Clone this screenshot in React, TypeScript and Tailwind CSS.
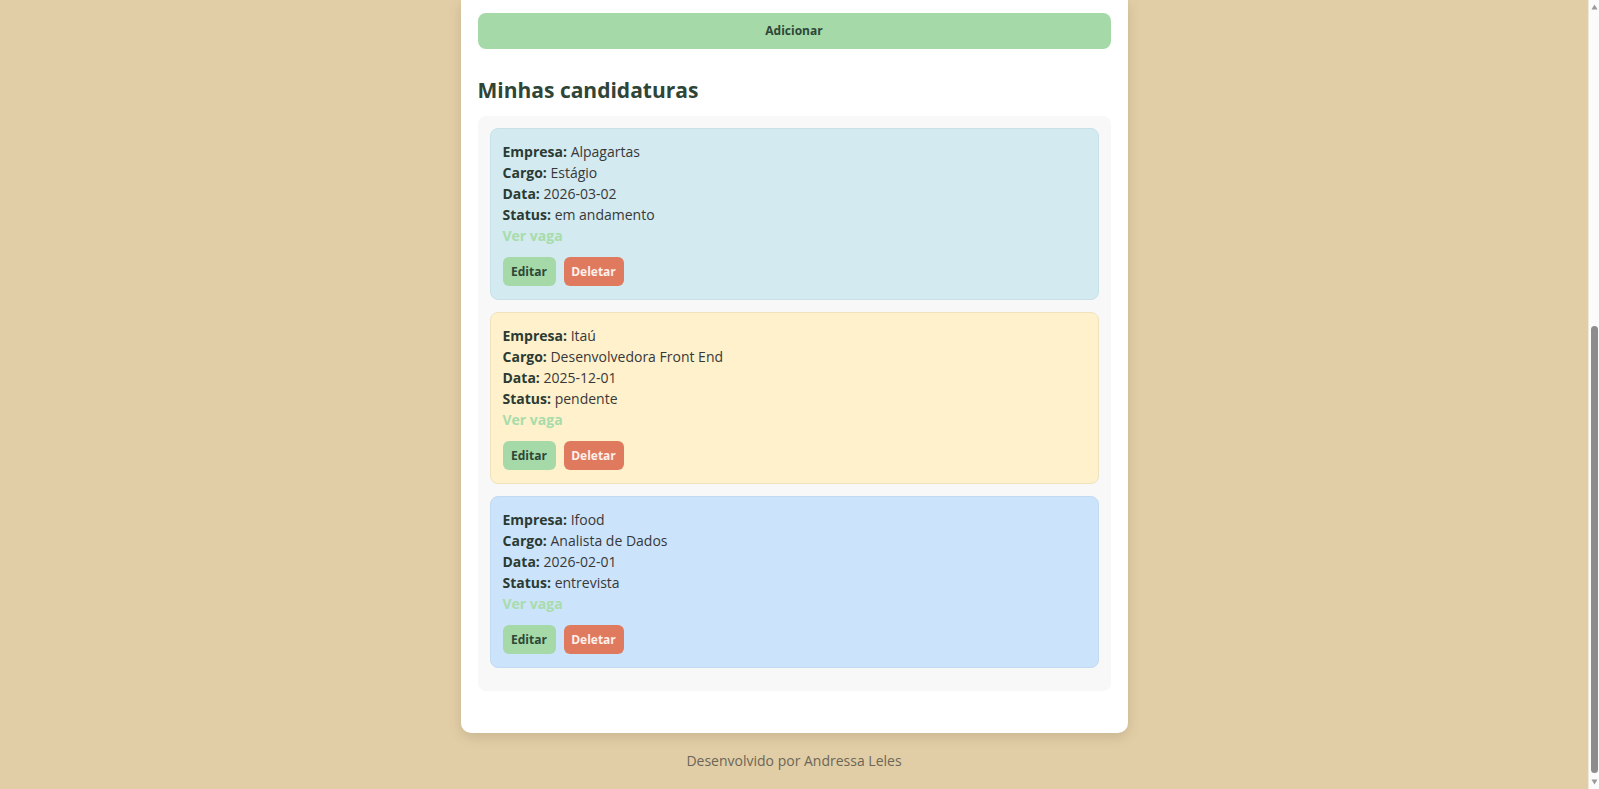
import React from "react";

type Cand = { empresa: string; cargo: string; data: string; status: string; bg: string };

const cands: Cand[] = [
  { empresa: "Alpagartas", cargo: "Estágio", data: "2026-03-02", status: "em andamento", bg: "bg-[#d2eaf0] border-[#c8e1e8]" },
  { empresa: "Itaú", cargo: "Desenvolvedora Front End", data: "2025-12-01", status: "pendente", bg: "bg-[#fef1cc] border-[#efe2bd]" },
  { empresa: "Ifood", cargo: "Analista de Dados", data: "2026-02-01", status: "entrevista", bg: "bg-[#cce4fb] border-[#c3dbf2]" },
];

function Scrollbar() {
  return (
    <div className="flex w-[11px] flex-col items-center border-l border-[#efe9dc] bg-[#fbfbfb] pt-[4px] pb-[4px]">
      <svg width="7" height="6" viewBox="0 0 7 6" className="shrink-0">
        <path d="M3.5 0.5 L6.5 5.5 L0.5 5.5 Z" fill="#9a9a9a" />
      </svg>
      <div className="flex-1" />
      <div className="h-[447px] w-[7px] shrink-0 rounded-full bg-[#8d8d8d]" />
      <svg width="7" height="6" viewBox="0 0 7 6" className="mt-[6px] shrink-0">
        <path d="M0.5 0.5 L6.5 0.5 L3.5 5.5 Z" fill="#9a9a9a" />
      </svg>
    </div>
  );
}

export default function App() {
  return (
    <div
      className="flex h-screen w-full overflow-hidden bg-[#e2cea6]"
      style={{ fontFamily: '"Open Sans", "Noto Sans", sans-serif' }}
    >
      <main className="flex flex-1 flex-col items-center">
        <div className="w-[667px] rounded-b-[10px] bg-white px-[17px] pt-[13px] pb-[42px] shadow-[0_4px_14px_rgba(0,0,0,0.12)]">
          <button className="h-[36px] w-full rounded-[8px] bg-[#a5d9a7] text-[12px] font-bold text-[#2d4739]">
            Adicionar
          </button>

          <h2 className="mt-[26px] mb-[11px] text-[21px] leading-[30px] font-bold text-[#2f4538]">Minhas candidaturas</h2>

          <div className="flex flex-col gap-[12px] rounded-[8px] bg-[#f8f8f8] p-[12px] pb-[23px]">
            {cands.map((c) => (
              <div key={c.empresa} className={`rounded-[8px] border px-[12px] pt-[12px] pb-[13px] ${c.bg}`}>
                <div className="text-[14px] leading-[21px] text-[#383838]">
                  <p><span className="font-bold text-[#2b3a33]">Empresa:</span> {c.empresa}</p>
                  <p><span className="font-bold text-[#2b3a33]">Cargo:</span> {c.cargo}</p>
                  <p><span className="font-bold text-[#2b3a33]">Data:</span> {c.data}</p>
                  <p><span className="font-bold text-[#2b3a33]">Status:</span> {c.status}</p>
                  <a href="#" className="font-bold text-[#a8dcaa]">Ver vaga</a>
                </div>
                <div className="mt-[11px] flex gap-[8px]">
                  <button className="h-[29px] w-[53px] rounded-[6px] bg-[#a5d9a7] text-[12px] font-bold text-[#2d4739]">Editar</button>
                  <button className="h-[29px] w-[60px] rounded-[6px] bg-[#e07a5f] text-[12px] font-bold text-[#fdf0ea]">Deletar</button>
                </div>
              </div>
            ))}
          </div>
        </div>
        <footer className="py-[18px] text-center text-[14px] leading-[20px] text-[#6b6658]">
          Desenvolvido por Andressa Leles
        </footer>
      </main>
      <Scrollbar />
    </div>
  );
}
